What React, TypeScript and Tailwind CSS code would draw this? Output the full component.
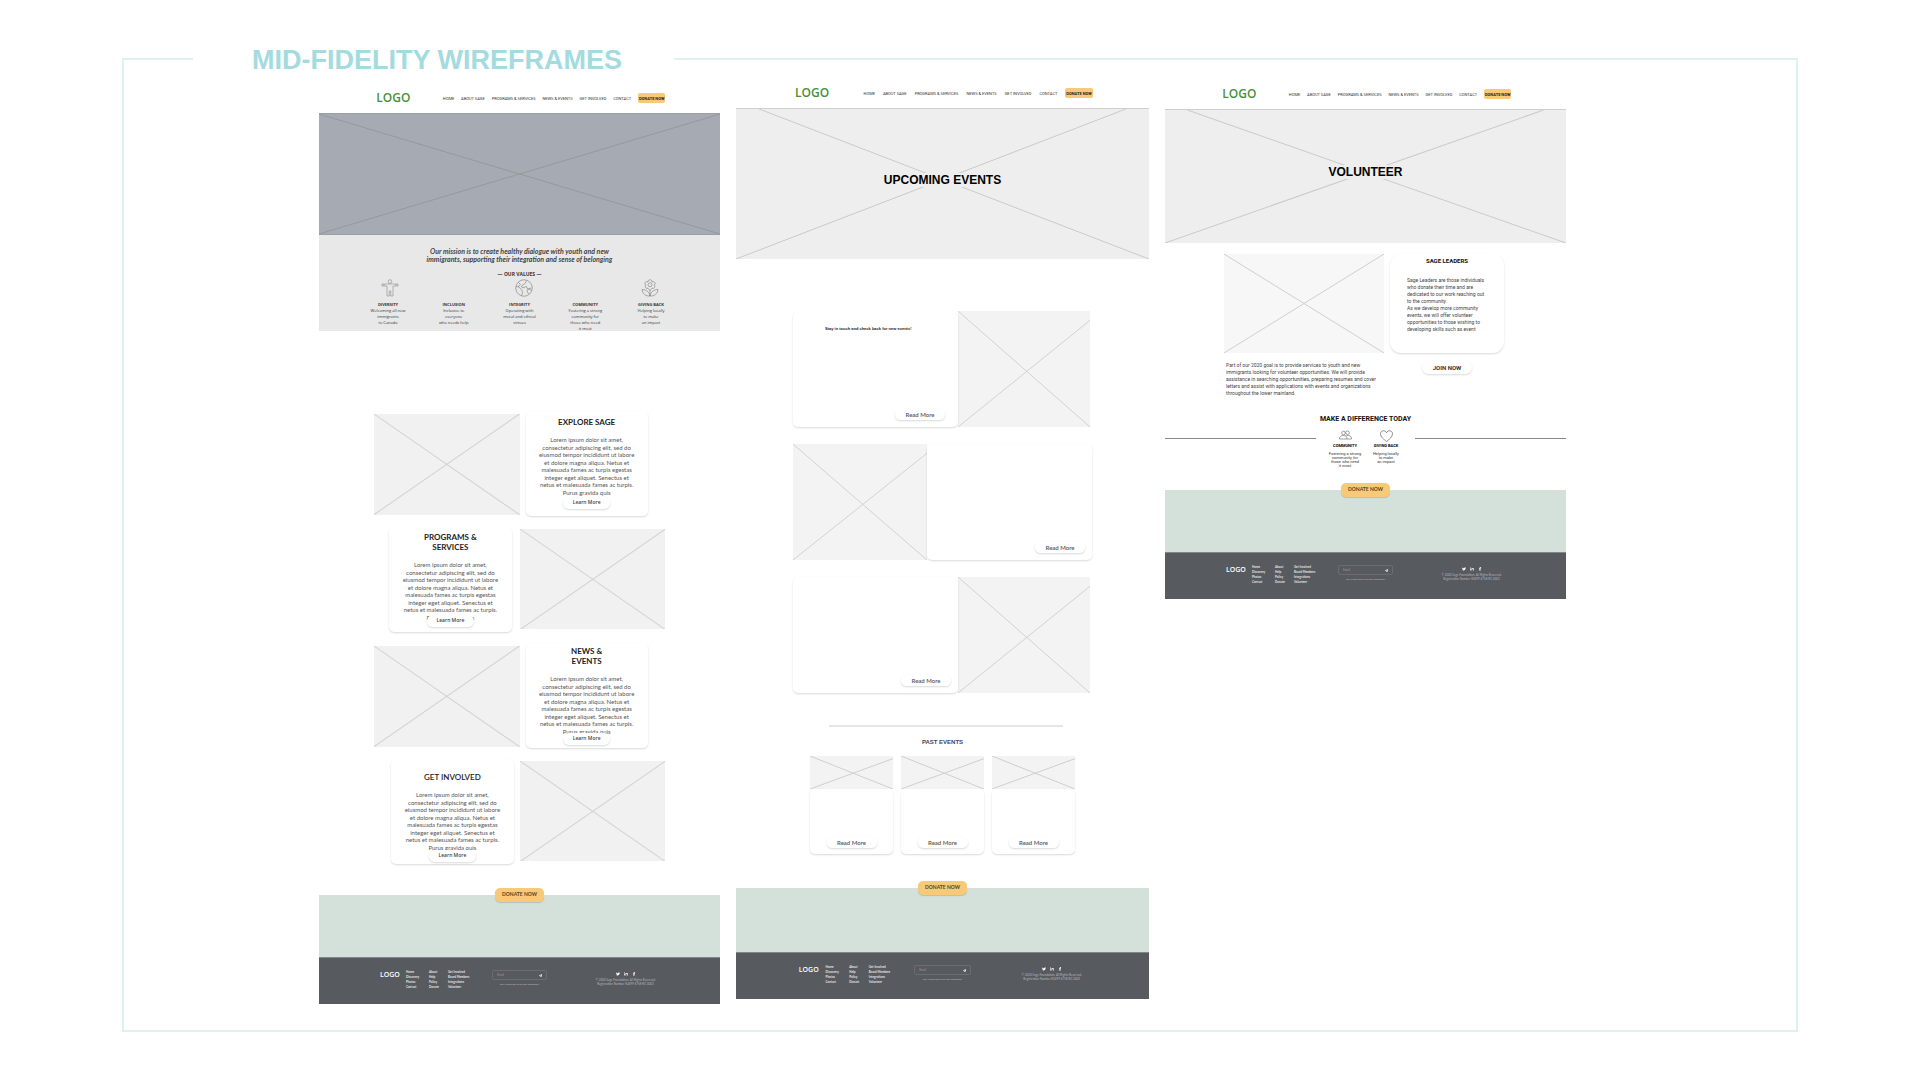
import React from "react";
import { FaTwitter, FaLinkedinIn, FaFacebookF, FaPaperPlane } from "react-icons/fa";

type CrossKind = "full" | "inset" | "low";

function Placeholder({ kind = "full", className, line = "#d2d2d2" }: { kind?: CrossKind; className: string; line?: string }) {
  const down = kind === "inset" ? 5.6 : 0;
  const upX = kind === "inset" ? 94.4 : 100;
  const upY = kind === "low" ? 8 : 0;
  const common = { stroke: line, strokeWidth: 1, vectorEffect: "non-scaling-stroke" as const };
  return (
    <svg className={`block ${className}`} viewBox="0 0 100 100" preserveAspectRatio="none" aria-hidden="true">
      <line x1={down} y1="0" x2="100" y2="100" {...common} />
      <line x1="0" y1="100" x2={upX} y2={upY} {...common} />
    </svg>
  );
}

const NAV = ["HOME", "ABOUT SAGE", "PROGRAMS & SERVICES", "NEWS & EVENTS", "GET INVOLVED", "CONTACT"];

function SiteHeader() {
  return (
    <header className="flex h-[30px] items-center pr-[13.6%] pl-[14.3%]">
      <a href="#" className="w-[23%] text-[12px] leading-[14px] font-semibold text-[#4a8f3c] font-['Open_Sans',sans-serif]">LOGO</a>
      <nav className="flex flex-1 items-center justify-between text-[4px] leading-[5px] whitespace-nowrap text-[#333] font-['Roboto',sans-serif]">
        {NAV.map((n) => (
          <a key={n} href="#">{n}</a>
        ))}
        <button className="h-[10px] rounded-[2px] bg-[#f7c978] px-px font-bold text-[#222]">DONATE NOW</button>
      </nav>
    </header>
  );
}

function Hero({ title, className }: { title: string; className: string }) {
  return (
    <section className={`grid border-t border-[#cfcfcf] bg-[#eee] ${className}`}>
      <Placeholder kind="inset" line="#cacaca" className="h-full w-full [grid-area:1/1]" />
      <h2 className="mb-[9px] place-self-center bg-[#eee] text-[12px] leading-[14px] font-bold text-black [grid-area:1/1] font-['Liberation_Sans',sans-serif]">{title}</h2>
    </section>
  );
}

const FOOTER_LINKS = [
  ["Home", "Discovery", "Photos", "Contact"],
  ["About", "Help", "Policy", "Donate"],
  ["Get Involved", "Board Members", "Integrations", "Volunteer"],
];

function SiteFooter({ id, className = "h-[62px]" }: { id: string; className?: string }) {
  return (
    <footer>
      <div className={`flex items-start justify-center bg-[#d4e1da] ${className}`}>
        <button className="-mt-[7px] h-[14px] rounded-[5px] bg-[#f7c978] px-[7px] text-[5px] font-bold text-[#54431f] shadow-[0_1px_1px_rgba(0,0,0,0.15)] font-['Lato',sans-serif]">DONATE NOW</button>
      </div>
      <div className="grid h-[47px] grid-cols-[26fr_23fr_19fr_44fr_55fr_47fr_65fr] content-start border-t border-[#80868a] bg-[#575a5f] px-[15.2%] pt-[12px] whitespace-nowrap text-white font-['Lato',sans-serif]">
        <a href="#" className="min-w-0 text-[7px] leading-[9px] font-semibold font-['Open_Sans',sans-serif]">LOGO</a>
        {FOOTER_LINKS.map((col) => (
          <ul key={col[0]} className="min-w-0 text-[3px] leading-[5px] font-bold text-[#e4e4e4]">
            {col.map((l) => (
              <li key={l}><a href="#">{l}</a></li>
            ))}
          </ul>
        ))}
        <form className="min-w-0">
          <div className="flex h-[10px] items-center rounded-[2px] border border-[#696c71] px-1">
            <input id={id} aria-label="Email" type="email" placeholder="Email" className="w-full min-w-0 text-[3px] leading-[4px] outline-none placeholder:text-[#96999d]" />
            <button type="button" aria-label="Send"><FaPaperPlane className="size-[3px]" /></button>
          </div>
          <p className="mt-[3px] text-center text-[2px] leading-[4px] text-[#c8c8c8] font-['Open_Sans',sans-serif]">Stay in touch with us for new information!</p>
        </form>
        <div className="col-start-7 flex min-w-0 flex-col items-center pr-[2px] text-[3px] leading-[4px] text-[#b4b6b9]">
          <div className="mb-[2px] flex gap-1 pt-[2px] text-white">
            <FaTwitter className="size-[4px]" />
            <FaLinkedinIn className="size-[4px]" />
            <FaFacebookF className="size-[4px]" />
          </div>
          <p>© 2020 Sage Foundation. All Rights Reserved.</p>
          <p>Registration Number 83499 6758 RC 0001</p>
        </div>
      </div>
    </footer>
  );
}

function PersonIcon() {
  return (
    <svg viewBox="0 0 36 36" className="size-[18px]" fill="none" stroke="#8a8a8a" strokeWidth="1.2" strokeLinejoin="round">
      <circle cx="18" cy="5" r="3.6" />
      <path d="M2 10h32v4H24v20h-4.5V24h-3v10H12V14H2z" />
      <path d="M6 10v4M30 10v4" />
    </svg>
  );
}

function GlobeIcon() {
  return (
    <svg viewBox="0 0 36 36" className="size-[18px]" fill="none" stroke="#7a7a7a" strokeWidth="1.2" strokeLinejoin="round">
      <circle cx="18" cy="18" r="16.5" />
      <path d="M23 3l-3 6-7 5 2 4 8-3 2 5 8-2M2 15l6 1 6 7 1 5-2 5M33 23l-6-3-3 4 3 6M7 7l4 4-5 4" />
    </svg>
  );
}

function FlowerIcon() {
  return (
    <svg viewBox="0 0 36 36" className="size-[18px]" fill="none" stroke="#7a7a7a" strokeWidth="1.2" strokeLinejoin="round">
      <circle cx="18" cy="11.5" r="4" />
      <path d="M14 6c-1-6 9-6 8 0 5-3 9 4 4 6 4 3 0 9-4 6-1 5-7 5-8 0-4 3-8-3-4-6-5-2-1-9 4-6z" />
      <path d="M18 22v12M18 34C9 35 3 29 2 21c8 0 15 5 16 13zM18 34c9 1 15-5 16-13-8 0-15 5-16 13z" />
    </svg>
  );
}

function PeopleIcon() {
  return (
    <svg viewBox="0 0 26 20" className="h-[10px] w-[13px]" fill="none" stroke="#555" strokeWidth="1.1" strokeLinejoin="round">
      <circle cx="9" cy="6" r="3.6" />
      <circle cx="17" cy="5.5" r="3.6" />
      <path d="M1 18c0-5 3-7 8-7s7 2 7 7zM15 11c6-1 10 1 10 7h-9" />
    </svg>
  );
}

function HeartIcon() {
  return (
    <svg viewBox="0 0 26 24" className="h-[12px] w-[13px]" fill="none" stroke="#555" strokeWidth="1.3" strokeLinejoin="round">
      <path d="M13 23C7 18 1 14 1 7.500C1 1 10 -1 13 5.500C16 -1 25 1 25 7.500C25 14 19 18 13 23z" />
    </svg>
  );
}

const VALUES: [string, string[]][] = [
  ["DIVERSITY", ["Welcoming all new", "immigrants", "to Canada"]],
  ["INCLUSION", ["Inclusive to", "everyone", "who needs help"]],
  ["INTEGRITY", ["Operating with", "moral and ethical", "virtues"]],
  ["COMMUNITY", ["Fostering a strong", "community for", "those who need", "it most"]],
  ["GIVING BACK", ["Helping locally", "to make", "an impact"]],
];

const LOREM = [
  "Lorem ipsum dolor sit amet,",
  "consectetur adipiscing elit, sed do",
  "eiusmod tempor incididunt ut labore",
  "et dolore magna aliqua. Netus et",
  "malesuada fames ac turpis egestas",
  "integer eget aliquet. Senectus et",
  "netus et malesuada fames ac turpis.",
  "Purus gravida quis",
];

const CARD = "bg-white shadow-[0_1px_2px_rgba(0,0,0,0.15)]";

function TopicRow({ title, pad, pull, layout, light = false }: { title: string[]; pad: string; pull: string; layout: string; light?: boolean }) {
  return (
    <div className={`flex ${layout}`}>
      <Placeholder className="mb-px aspect-[146/101] w-1/2 bg-[#f1f1f1]" />
      <article className={`flex h-[105px] w-[42%] flex-col items-center rounded-[5px] text-center font-['Lato',sans-serif] ${CARD} ${pad}`}>
        <h3 className={`text-[8px] leading-[10px] text-[#222] ${light ? "font-semibold" : "font-bold"}`}>
          {title.map((t) => <span key={t} className="block">{t}</span>)}
        </h3>
        <p className="mt-[9px] text-[6px] leading-tight whitespace-nowrap text-[#555]">
          {LOREM.map((t) => <span key={t} className="block">{t}</span>)}
        </p>
        <button className={`relative h-[12px] w-[47px] rounded-full text-[5px] font-semibold text-[#444] font-['Open_Sans',sans-serif] ${CARD} ${pull}`}>Learn More</button>
      </article>
    </div>
  );
}

function HomePage() {
  return (
    <article className="mt-[10px] font-['Open_Sans',sans-serif]">
      <SiteHeader />
      <Placeholder line="#94999c" className="h-[122px] w-full border-y border-[#9a9fa4] bg-[#a6abb3]" />
      <section className="h-[96px] bg-[#e8e8e8] pt-[12px] text-center text-[#333]">
        <p className="text-[7px] leading-[8px] font-bold whitespace-nowrap text-[#444] italic font-['Lato',sans-serif]">
          Our mission is to create healthy dialogue with youth and new<br />immigrants, supporting their integration and sense of belonging
        </p>
        <h3 className="mt-[8px] text-[5px] leading-[7px] font-bold">— OUR VALUES —</h3>
        <div className="mx-auto mt-px grid w-[278px] grid-cols-[134px_126px_18px]">
          <PersonIcon />
          <GlobeIcon />
          <FlowerIcon />
        </div>
        <div className="mx-auto mt-1 grid w-[82%] grid-cols-5 whitespace-nowrap">
          {VALUES.map(([name, lines]) => (
            <div key={name}>
              <h4 className="text-[4px] leading-[7px] font-bold">{name}</h4>
              <p className="text-[4px] leading-[6px]">
                {lines.map((l) => <span key={l} className="block">{l}</span>)}
              </p>
            </div>
          ))}
        </div>
      </section>
      <section className="mx-auto mt-[80px] mb-[31px] flex w-[291px] flex-col gap-[11px]">
        <TopicRow title={["EXPLORE SAGE"]} pad="pt-[6px]" pull="mt-px" layout="items-end gap-[6px]" />
        <TopicRow title={["PROGRAMS &", "SERVICES"]} pad="pt-[5px]" pull="-mt-[6px]" layout="flex-row-reverse items-center gap-[8px]" />
        <TopicRow title={["NEWS &", "EVENTS"]} pad="pt-[3px]" pull="-mt-[2px]" layout="items-end gap-[6px]" />
        <TopicRow title={["GET INVOLVED"]} pad="pt-[13px]" pull="-mt-px" layout="flex-row-reverse items-center gap-[6px]" light />
      </section>
      <SiteFooter id="email-home" />
    </article>
  );
}

function ReadMore() {
  return <button className={`h-[11px] w-[50px] rounded-full text-[6px] leading-[8px] font-semibold text-[#555] ${CARD}`}>Read More</button>;
}

function EventRow({ note, layout = "w-[297px]", pad }: { note?: string; layout?: string; pad: string }) {
  return (
    <div className={`flex h-[116px] ${layout}`}>
      <article className={`relative flex w-[165px] flex-col items-end justify-between rounded-[5px] pt-[15px] pb-[7px] ${CARD} ${pad}`}>
        <p className="w-full pl-[19px] text-[4px] leading-[6px] font-bold whitespace-nowrap text-[#222] font-['Liberation_Sans',sans-serif]">{note}</p>
        <ReadMore />
      </article>
      <Placeholder kind="low" className="h-full flex-1 bg-[#f3f3f3]" />
    </div>
  );
}

function EventsPage() {
  return (
    <article className="mt-[5px]">
      <SiteHeader />
      <Hero title="UPCOMING EVENTS" className="h-[151px]" />
      <section className="mt-[52px] ml-[57px] flex flex-col gap-[17px]">
        <EventRow note="Stay in touch and check back for new events!" pad="px-[13px]" />
        <EventRow layout="w-[299px] flex-row-reverse" pad="px-[7px]" />
        <EventRow pad="px-[7px]" />
      </section>
      <hr className="mt-[32px] ml-[93px] w-[234px] border-t-2 border-[#e6e6e6]" />
      <h3 className="mt-[11px] text-center text-[6px] leading-[8px] font-bold text-[#3b4664] font-['Liberation_Sans',sans-serif]">PAST EVENTS</h3>
      <section className="mx-auto mt-[10px] mb-[34px] grid w-[265px] grid-cols-3 gap-2">
        {[1, 2, 3].map((n) => (
          <article key={n}>
            <Placeholder kind="low" line="#cfcfcf" className="h-[33px] w-full bg-[#f3f3f3]" />
            <div className={`flex h-[65px] items-end justify-center rounded-[5px] pb-[6px] ${CARD}`}><ReadMore /></div>
          </article>
        ))}
      </section>
      <SiteFooter id="email-events" className="h-[64px]" />
    </article>
  );
}

function VolunteerPage() {
  return (
    <article className="mt-[6px] font-['Roboto',sans-serif]">
      <SiteHeader />
      <Hero title="VOLUNTEER" className="h-[134px]" />
      <section className="mt-[11px] ml-[59px] grid w-[280px] grid-cols-[160px_114px] gap-x-[6px] text-[5px] leading-[7px] whitespace-nowrap text-[#444]">
        <Placeholder line="#cfcfcf" className="h-[99px] w-full bg-[#f7f7f7]" />
        <article className={`rounded-[11px] pt-[3px] ${CARD}`}>
          <h3 className="text-center text-[6px] leading-[8px] font-bold text-[#111]">SAGE LEADERS</h3>
          <p className="mt-[12px] pl-[17px]">
            Sage Leaders are those individuals<br />who donate their time and are<br />dedicated to our work reaching out<br />to the community.<br />As we develop more community<br />events, we will offer volunteer<br />opportunities to those wishing to<br />developing skills such as event
          </p>
        </article>
        <p className="mt-[9px] pl-[2px]">
          Part of our 2020 goal is to provide services to youth and new<br />immigrants looking for volunteer opportunities. We will provide<br />assistance in searching opportunities, preparing resumes and cover<br />letters and assist with applications with events and organizations<br />throughout the lower mainland.
        </p>
        <div className="flex justify-center pt-[8px]">
          <button className={`h-[13px] w-[50px] rounded-full text-[6px] leading-[8px] font-bold text-[#333] ${CARD}`}>JOIN NOW</button>
        </div>
      </section>
      <h3 className="mt-[18px] text-center text-[7px] leading-[8px] font-bold text-[#111]">MAKE A DIFFERENCE TODAY</h3>
      <section className="mt-[7px] mb-[20px] flex h-[40px]">
        <div className="mt-[8px] h-px flex-1 bg-[#888]" />
        <div className="grid w-[99px] grid-cols-[41px_41px] justify-center text-center text-[4px] leading-[4px] whitespace-nowrap text-[#333]">
          <div className="flex flex-col items-center">
            <div className="h-[13px]"><PeopleIcon /></div>
            <h4 className="mb-[3px] leading-[6px] font-bold text-black">COMMUNITY</h4>
            <p>Fostering a strong<br />community for<br />those who need<br />it most</p>
          </div>
          <div className="flex flex-col items-center">
            <div className="h-[13px]"><HeartIcon /></div>
            <h4 className="mb-[3px] leading-[6px] font-bold text-black">GIVING BACK</h4>
            <p>Helping locally<br />to make<br />an impact</p>
          </div>
        </div>
        <div className="mt-[8px] h-px flex-1 bg-[#888]" />
      </section>
      <SiteFooter id="email-volunteer" />
    </article>
  );
}

export default function App() {
  return (
    <main className="min-h-screen bg-white px-[122px] pt-[45px] font-['Lato',sans-serif]">
      <header className="flex h-[28px] items-center">
        <div className="h-[15px] w-[71px] self-end border-t-2 border-l-2 border-[#dff2f3]" />
        <h1 className="w-[481px] pt-px pl-[7px] text-center text-[27px] leading-[28px] font-bold whitespace-nowrap text-[#a3dbde] font-['Liberation_Sans',sans-serif]">MID-FIDELITY WIREFRAMES</h1>
        <div className="h-[15px] flex-1 self-end border-t-2 border-r-2 border-[#dff2f3]" />
      </header>
      <div className="grid grid-cols-[401fr_413fr_401fr] items-start gap-4 border-x-2 border-b-2 border-[#dff2f3] pr-[230px] pb-[26px] pl-[195px]">
        <HomePage />
        <EventsPage />
        <VolunteerPage />
      </div>
    </main>
  );
}
